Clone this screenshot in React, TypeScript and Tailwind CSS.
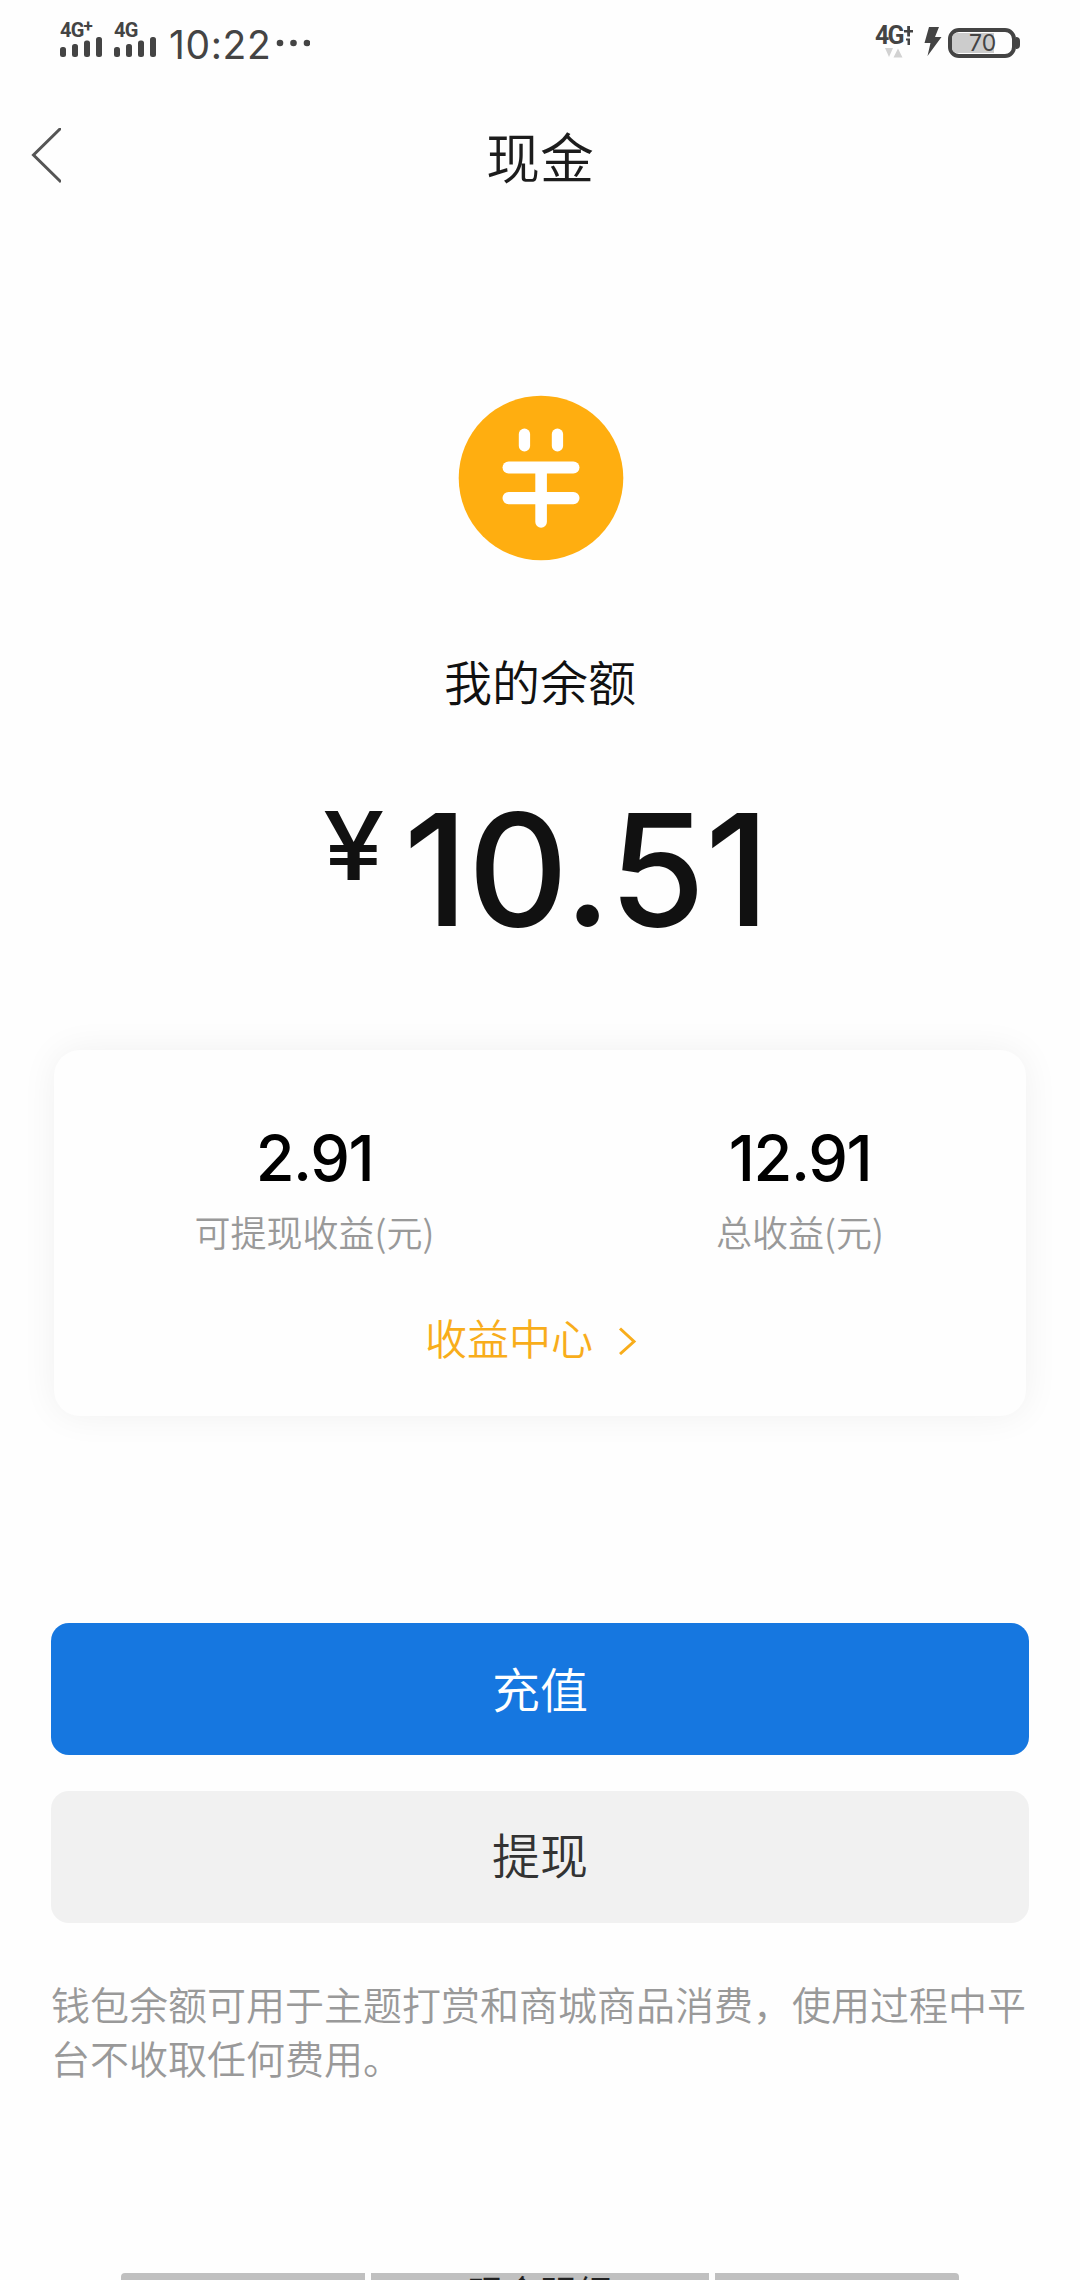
const stats = [
  { value: "2.91", label: "可提现收益(元)" },
  { value: "12.91", label: "总收益(元)" },
];

function SignalBars() {
  return (
    <svg className="w-[42px] h-[20px]" viewBox="0 0 42 20" fill="#444444">
      <rect x="0" y="10" width="6" height="10" rx="2.5" />
      <rect x="12" y="7" width="6" height="13" rx="2.5" />
      <rect x="24" y="3.5" width="6" height="16.5" rx="2.5" />
      <rect x="36" y="0" width="6" height="20" rx="2.5" />
    </svg>
  );
}

function StatusBar() {
  return (
    <div className="flex h-[84px] items-start justify-between pl-[60px] pr-[60px] font-['Inter',sans-serif] text-[#444444]">
      <div className="flex">
        <div className="w-[54px] pt-[20px]">
          <div className="flex h-[17px] font-['Roboto',sans-serif] text-[20px] leading-[20px] font-bold tracking-[-0.8px]">
            4G<span className="text-[17px] leading-[12px]">+</span>
          </div>
          <SignalBars />
        </div>
        <div className="w-[54px] pt-[20px]">
          <div className="h-[17px] font-['Roboto',sans-serif] text-[20px] leading-[20px] font-bold tracking-[-0.8px]">4G</div>
          <SignalBars />
        </div>
        <div className="w-[106px] pt-[24px] pl-[1px] text-[39px] leading-[41px] font-normal tracking-[0.6px]">10:22</div>
        <svg className="mt-[38px] h-[10px] w-[36px]" viewBox="0 0 36 10" fill="#444444">
          <circle cx="6" cy="5" r="3.3" />
          <circle cx="19.5" cy="5" r="3.3" />
          <circle cx="33" cy="5" r="3.3" />
        </svg>
      </div>

      <div className="flex">
        <div className="w-[49px] pt-[24px]">
          <div className="flex h-[24px] font-['Roboto',sans-serif] text-[25px] leading-[24px] font-bold tracking-[-1.8px]">
            4G
            <svg className="mt-[2px] ml-[1px] h-[20px] w-[9px]" viewBox="0 0 9 20" fill="#444444">
              <path d="M0 4h9v2.5H0z M3.2 0h2.8v10.5H3.2z M3.5 12.5h2.5V19H3.5z M2 12.5h2v2H2z" />
            </svg>
          </div>
          <svg className="ml-[10px] h-[10px] w-[18px]" viewBox="0 0 18 10" fill="#d2d2d2">
            <path d="M0 0h8L4 9z M8.5 9.5h9L13 0.5z" />
          </svg>
        </div>
        <svg className="mt-[26px] h-[31px] w-[18px]" viewBox="0 0 18 31" fill="#444444">
          <path d="M5 1h10l-4 10h6.5L3.5 30 6.5 17H0.5z" />
        </svg>
        <div className="mt-[27px] ml-[6px] flex items-center">
          <div className="flex h-[30px] w-[68px] items-center rounded-[11px] border-4 border-[#444444]">
            <div className="h-[20px] w-[42px] rounded-l-[5px] bg-[#cccccc]" />
            <span className="-ml-[25px] text-[23px] leading-[22px] font-normal">70</span>
          </div>
          <div className="h-[12px] w-[4px] rounded-r-[4px] bg-[#444444]" />
        </div>
      </div>
    </div>
  );
}

function CoinIcon() {
  return (
    <svg className="h-[166px] w-[166px]" viewBox="0 0 166 166">
      <circle cx="83" cy="83" r="82.3" fill="#ffae10" />
      <g fill="#ffffff">
        <rect x="60.8" y="33.5" width="11.3" height="23" rx="5.6" />
        <rect x="93.8" y="33.5" width="11.3" height="23" rx="5.6" />
        <rect x="44.5" y="66.4" width="77" height="12.2" rx="6.1" />
        <rect x="44.5" y="97" width="77" height="12.2" rx="6.1" />
        <rect x="77.3" y="70" width="11.6" height="62.7" rx="5.8" />
      </g>
    </svg>
  );
}

export default function App() {
  return (
    <div className="flex h-[2280px] w-[1080px] flex-col overflow-hidden bg-[#fefefe] font-['Noto_Sans_CJK_SC',sans-serif] font-[350] text-[#111111]">
      <StatusBar />

      {/* Header */}
      <header className="grid h-[144px] grid-cols-[1fr_auto_1fr] items-center">
        <svg className="ml-[30px] h-[56px] w-[31px]" viewBox="0 0 31 56" fill="none" stroke="#555555" strokeWidth="3">
          <path d="M31 0L3.5 27L31 54" />
        </svg>
        <h1 className="text-[54px] leading-[80px] text-[#1c1c1c]">现金</h1>
        <div />
      </header>

      {/* Balance */}
      <section className="flex flex-col items-center pt-[167px]">
        <div className="pl-[2px]">
          <CoinIcon />
        </div>
        <p className="mt-[84px] text-[48px] leading-[70px]">我的余额</p>
        <div className="mt-[70px] flex h-[170px] items-start pl-[12px] font-['Inter',sans-serif] font-medium">
          <span className="mt-[11px] origin-left scale-x-[1.16] text-[95px] leading-[100px]">¥</span>
          <span className="ml-[28px] text-[156px] leading-[170px] tracking-[-0.4px]">10.51</span>
        </div>
      </section>

      {/* Earnings card */}
      <section className="mx-[54px] mt-[95px] flex h-[366px] shrink-0 flex-col rounded-[26px] bg-[#fefefe] shadow-[0_0_36px_rgba(0,0,0,0.06)]">
        <div className="flex pt-[70px]">
          {stats.map((s) => (
            <div key={s.label} className="flex w-[486px] flex-col items-center first:pl-[35px] last:pl-[34px]">
              <span className="font-['Inter',sans-serif] text-[63px] leading-[76px] font-medium tracking-[-1.4px] text-black">
                {s.value}
              </span>
              <span className="mt-[9px] text-[36px] leading-[52px] text-[#999999]">{s.label}</span>
            </div>
          ))}
        </div>
        <div className="mt-[50px] flex items-center pl-[371px] text-[42px] leading-[60px] text-[#f8ad1b]">
          收益中心
          <svg className="ml-[24px] mt-[7px] h-[28px] w-[20px]" viewBox="0 0 20 28" fill="none" stroke="#f8ad1b" strokeWidth="3">
            <path d="M3 1.5L17 14.5L3 27" />
          </svg>
        </div>
      </section>

      {/* Actions */}
      <section className="mx-[51px] mt-[207px] flex flex-col gap-[36px]">
        <button className="h-[132px] rounded-[18px] bg-[#1677e0] pb-[4px] text-[48px] leading-[70px] text-white">充值</button>
        <button className="h-[132px] rounded-[18px] bg-[#f1f1f1] pb-[8px] text-[48px] leading-[70px] text-[#333333]">提现</button>
      </section>

      <p className="mx-[51px] mt-[53px] text-[39px] leading-[54px] text-[#999999]">
        钱包余额可用于主题打赏和商城商品消费，使用过程中平台不收取任何费用。
      </p>

      {/* Bottom tabs, cut off by the screen edge */}
      <nav className="mx-[121px] mt-auto flex h-[7px] shrink-0 gap-[6px] overflow-hidden rounded-t-[4px]">
        <div className="w-[244px] bg-[#c0c0c0]" />
        <div className="w-[338px] bg-[#c0c0c0] text-center text-[36px] leading-[37px] text-[#222222]">现金明细</div>
        <div className="w-[244px] bg-[#c0c0c0]" />
      </nav>
    </div>
  );
}
